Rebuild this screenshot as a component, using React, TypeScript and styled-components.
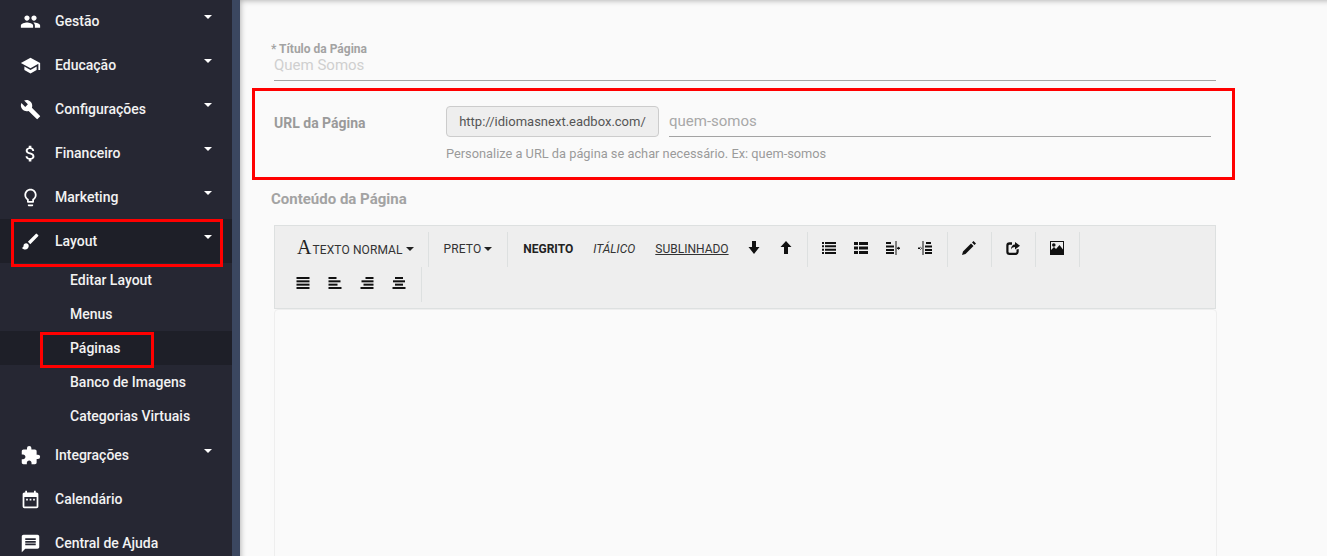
import React from 'react';
import styled, { createGlobalStyle } from 'styled-components';
import {
    MdPeople,
    MdSchool,
    MdBuild,
    MdAttachMoney,
    MdLightbulbOutline,
    MdBrush,
    MdExtension,
    MdDateRange,
    MdMessage,
} from 'react-icons/md';

const GlobalStyle = createGlobalStyle`
    html, body {
        margin: 0;
        padding: 0;
        height: 100%;
        overflow: hidden;
    }
    body {
        font-family: Roboto, 'Liberation Sans', sans-serif;
        background: #fafafa;
    }
    #root {
        height: 100%;
    }
`;

// glyph-like toolbar icons, drawn on a 14x14 grid
const bars = (rows: [number, number][]) =>
    rows.map(([x, w], i) => <rect key={i} x={x} y={1 + i * 3.33} width={w} height={2} fill="#111" />);

const icons: Record<string, React.ReactNode> = {
    down: <path d="M5 0h4v6h3.500L7 13 1.500 6H5z" fill="#111" />,
    up: <path d="M5 13h4V6h3.500L7 0 1.500 6H5z" fill="#111" />,
    list: (
        <path
            d="M0 1h2v2H0zM3 1h11v2H3zM0 4.300h2v2H0zM3 4.300h11v2H3zM0 7.700h2v2H0zM3 7.700h11v2H3zM0 11h2v2H0zM3 11h11v2H3z"
            fill="#111"
        />
    ),
    thList: (
        <path d="M0 1h4v3H0zM5 1h9v3H5zM0 5.500h4v3H0zM5 5.500h9v3H5zM0 10h4v3H0zM5 10h9v3H5z" fill="#111" />
    ),
    indentLeft: (
        <path
            d="M0 1h5v2H0zM0 4.500h8v2H0zM0 8h8v2H0zM0 11h8v2H0zM9.500 0h1v14h-1zM11 6.500h3v1.500h-3zM11 7.200l2-1.700v3.400z"
            fill="#111"
        />
    ),
    indentRight: (
        <path
            d="M8 1h5v2H8zM7 4.500h7v2H7zM7 8h7v2H7zM7 11h7v2H7zM4.500 0h1v14h-1zM0 6.500h3v1.500H0zM4 7.200L2 5.500v3.400z"
            fill="#111"
        />
    ),
    pencil: <path d="M0 14l1-3.500L9 2.500l2.500 2.500-8 8zM10 1.500L11.500 0 14 2.500 12.500 4z" fill="#111" />,
    share: (
        <path
            d="M10.500 8.500v2.200a1 1 0 0 1-1 1h-6a1 1 0 0 1-1-1v-6a1 1 0 0 1 1-1H6V1.200H3.500A3.200 3.200 0 0 0 .3 4.400v6.400a3.200 3.200 0 0 0 3.200 3.200h6.200a3.200 3.200 0 0 0 3-3V8zM9 1v2.500C6.500 3.500 5 5.500 5 8.500c1-1.800 2.300-2.500 4-2.500v2.500L14 4.800z"
            fill="#111"
        />
    ),
    picture: (
        <path
            fillRule="evenodd"
            d="M0 0h14v14H0zM1 1v8l3-3 2 2 3.500-4L13 8.500V1zM3.800 2.200a1.800 1.800 0 1 1 0 3.600 1.800 1.800 0 0 1 0-3.600z"
            fill="#111"
        />
    ),
    justify: bars([[0.5, 13], [0.5, 13], [0.5, 13], [0.5, 13]]),
    alignLeft: bars([[0.5, 8], [0.5, 12], [0.5, 9], [0.5, 13]]),
    alignRight: bars([[5.500, 8], [1.500, 12], [3.500, 10], [0.5, 13]]),
    alignCenter: bars([[3, 8], [1, 12], [3, 8], [0.5, 13]]),
};

const Shell = styled.div`
    display: flex;
    height: 556px;
    overflow: hidden;
`;

const Sidebar = styled.nav`
    position: relative;
    flex: 0 0 232px;
    margin-top: -1px;
    background: #262733;
    border-right: 8px solid #3b4760;
`;

const NavRow = styled.div<{ $active?: boolean }>`
    display: flex;
    align-items: center;
    height: 44px;
    padding-left: 20px;
    background: ${(p) => (p.$active ? '#1e1f28' : 'transparent')};
    color: #f2f2f2;
    font-size: 14px;
    font-weight: 500;
`;

const NavIcon = styled.span`
    display: flex;
    justify-content: center;
    width: 21px;
    margin-right: 14px;
    font-size: 21px;
    color: #fff;
`;

const NavLabel = styled.span`
    flex: 1;
`;

const Caret = styled.span`
    align-self: flex-start;
    width: 0;
    height: 0;
    margin: 16px 20px 0 0;
    border-left: 4px solid transparent;
    border-right: 4px solid transparent;
    border-top: 4px solid #fff;
`;

const SubRow = styled.div<{ $active?: boolean }>`
    height: 34px;
    padding-left: 70px;
    line-height: 34px;
    background: ${(p) => (p.$active ? '#1e1f28' : 'transparent')};
    color: #f2f2f2;
    font-size: 14px;
    font-weight: 500;
`;

const Main = styled.main`
    flex: 1;
    min-width: 0;
    padding: 42px 111px 0 31px;
    background: #fafafa;
    box-shadow: inset 5px 5px 6px -5px rgba(0, 0, 0, 0.35);
`;

const FieldLabel = styled.div`
    font-size: 12px;
    line-height: 15px;
    font-weight: 700;
    color: #a3a3a3;
`;

const TitleInput = styled.div`
    height: 23px;
    margin-left: 3px;
    border-bottom: 1px solid #a3a3a3;
    font-size: 15px;
    line-height: 16px;
    color: #cfcfcf;
`;

const UrlSection = styled.section`
    display: flex;
    margin: 25px 5px 0 3px;
    height: 85px;
`;

const UrlLabel = styled.div`
    flex: 0 0 172px;
    padding-top: 9px;
    font-size: 14px;
    line-height: 17px;
    font-weight: 700;
    color: #9a9a9a;
`;

const UrlFields = styled.div`
    flex: 1;
`;

const UrlRow = styled.div`
    display: flex;
    gap: 10px;
`;

const Addon = styled.div`
    flex: 0 0 auto;
    box-sizing: border-box;
    width: 213px;
    height: 31px;
    border: 1px solid #ccc;
    border-radius: 4px;
    background: #eee;
    color: #555;
    font-size: 13px;
    line-height: 29px;
    text-align: center;
`;

const SlugInput = styled.div`
    flex: 1;
    height: 30px;
    border-bottom: 1px solid #a3a3a3;
    color: #a8a8a8;
    font-size: 15px;
    line-height: 31px;
`;

const Help = styled.div`
    margin-top: 9px;
    color: #9a9a9a;
    font-size: 12.8px;
    line-height: 15px;
`;

const SectionTitle = styled.h2`
    margin: 0;
    font-size: 15px;
    line-height: 17px;
    font-weight: 700;
    color: #a3a3a3;
`;

const Editor = styled.div`
    margin: 17px 0 0 3px;
`;

const Toolbar = styled.div`
    box-sizing: border-box;
    height: 84px;
    padding: 6px 0 0 7px;
    background: #eee;
    border: 1px solid #dde0e0;
`;

const ToolRow = styled.div`
    display: flex;
    height: 35px;
`;

const ToolGroup = styled.div<{ $right?: number }>`
    display: flex;
    align-items: center;
    padding: 0 ${(p) => p.$right ?? 14}px 2px 15px;
    gap: 20px;
    border-right: 1px solid #dde0e0;
    font-size: 12px;
    color: #333;
`;

const IconGroup = styled(ToolGroup)`
    gap: 18px;
    padding: 0 15px 3px 14px;
`;

const GlyphPair = styled.span`
    display: flex;
    gap: 18px;
    margin: -1px 0 0 -2px;
`;

const TextTool = styled.span<{ $kind?: 'bold' | 'italic' | 'underline' }>`
    font-weight: ${(p) => (p.$kind === 'bold' ? 700 : 400)};
    font-style: ${(p) => (p.$kind === 'italic' ? 'italic' : 'normal')};
    text-decoration: ${(p) => (p.$kind === 'underline' ? 'underline' : 'none')};
    color: ${(p) => (p.$kind === 'bold' ? '#222' : '#333')};
`;

const Dropdown = styled.span`
    display: flex;
    align-items: baseline;
    letter-spacing: 0.1px;
`;

const SerifA = styled.span`
    margin-right: 1px;
    font-family: 'Liberation Serif', serif;
    font-size: 20px;
    line-height: 14px;
    color: #222;
`;

const DropCaret = styled.span`
    align-self: center;
    width: 0;
    height: 0;
    margin: 1px 0 0 3px;
    border-left: 4px solid transparent;
    border-right: 4px solid transparent;
    border-top: 4px solid #222;
`;

const Canvas = styled.div`
    height: 260px;
    margin-right: -1px;
    background: #fafafa;
    border: 1px solid #eee;
    border-radius: 4px 4px 0 0;
`;

const Marker = styled.div<{ $x: number; $y: number; $w: number; $h: number }>`
    position: absolute;
    left: ${(p) => p.$x}px;
    top: ${(p) => p.$y}px;
    width: ${(p) => p.$w}px;
    height: ${(p) => p.$h}px;
    box-sizing: border-box;
    border: 3px solid #f00;
    pointer-events: none;
`;

const Glyph: React.FC<{ name: string }> = ({ name }) => (
    <svg width="14" height="14" viewBox="0 0 14 14">
        {icons[name]}
    </svg>
);

const Nav: React.FC<{ icon: React.ReactNode; label: string; caret?: boolean; active?: boolean }> = ({
    icon,
    label,
    caret = true,
    active,
}) => (
    <NavRow $active={active}>
        <NavIcon>{icon}</NavIcon>
        <NavLabel>{label}</NavLabel>
        {caret && <Caret />}
    </NavRow>
);

export default function App() {
    return (
        <>
            <GlobalStyle />
            <Shell>
                <Sidebar>
                    <Nav icon={<MdPeople />} label="Gestão" />
                    <Nav icon={<MdSchool />} label="Educação" />
                    <Nav icon={<MdBuild />} label="Configurações" />
                    <Nav icon={<MdAttachMoney />} label="Financeiro" />
                    <Nav icon={<MdLightbulbOutline />} label="Marketing" />
                    <Nav icon={<MdBrush />} label="Layout" active />
                    <SubRow>Editar Layout</SubRow>
                    <SubRow>Menus</SubRow>
                    <SubRow $active>Páginas</SubRow>
                    <SubRow>Banco de Imagens</SubRow>
                    <SubRow>Categorias Virtuais</SubRow>
                    <Nav icon={<MdExtension />} label="Integrações" />
                    <Nav icon={<MdDateRange />} label="Calendário" caret={false} />
                    <Nav icon={<MdMessage />} label="Central de Ajuda" caret={false} />
                </Sidebar>
                <Main>
                    <FieldLabel>* Título da Página</FieldLabel>
                    <TitleInput>Quem Somos</TitleInput>
                    <UrlSection>
                        <UrlLabel>URL da Página</UrlLabel>
                        <UrlFields>
                            <UrlRow>
                                <Addon>http://idiomasnext.eadbox.com/</Addon>
                                <SlugInput>quem-somos</SlugInput>
                            </UrlRow>
                            <Help>Personalize a URL da página se achar necessário. Ex: quem-somos</Help>
                        </UrlFields>
                    </UrlSection>
                    <SectionTitle>Conteúdo da Página</SectionTitle>
                    <Editor>
                        <Toolbar>
                            <ToolRow>
                                <ToolGroup>
                                    <Dropdown>
                                        <SerifA>A</SerifA>
                                        TEXTO NORMAL
                                        <DropCaret />
                                    </Dropdown>
                                </ToolGroup>
                                <ToolGroup $right={15}>
                                    <Dropdown>
                                        PRETO
                                        <DropCaret />
                                    </Dropdown>
                                </ToolGroup>
                                <ToolGroup>
                                    <TextTool $kind="bold">NEGRITO</TextTool>
                                    <TextTool $kind="italic">ITÁLICO</TextTool>
                                    <TextTool $kind="underline">SUBLINHADO</TextTool>
                                    <GlyphPair>
                                        <Glyph name="down" />
                                        <Glyph name="up" />
                                    </GlyphPair>
                                </ToolGroup>
                                <IconGroup>
                                    <Glyph name="list" />
                                    <Glyph name="thList" />
                                    <Glyph name="indentLeft" />
                                    <Glyph name="indentRight" />
                                </IconGroup>
                                <IconGroup>
                                    <Glyph name="pencil" />
                                </IconGroup>
                                <IconGroup>
                                    <Glyph name="share" />
                                </IconGroup>
                                <IconGroup>
                                    <Glyph name="picture" />
                                </IconGroup>
                            </ToolRow>
                            <ToolRow>
                                <IconGroup>
                                    <Glyph name="justify" />
                                    <Glyph name="alignLeft" />
                                    <Glyph name="alignRight" />
                                    <Glyph name="alignCenter" />
                                </IconGroup>
                            </ToolRow>
                        </Toolbar>
                        <Canvas />
                    </Editor>
                </Main>
            </Shell>
            <Marker $x={11} $y={219} $w={212} $h={48} />
            <Marker $x={40} $y={332} $w={114} $h={36} />
            <Marker $x={252} $y={88} $w={983} $h={92} />
        </>
    );
}
